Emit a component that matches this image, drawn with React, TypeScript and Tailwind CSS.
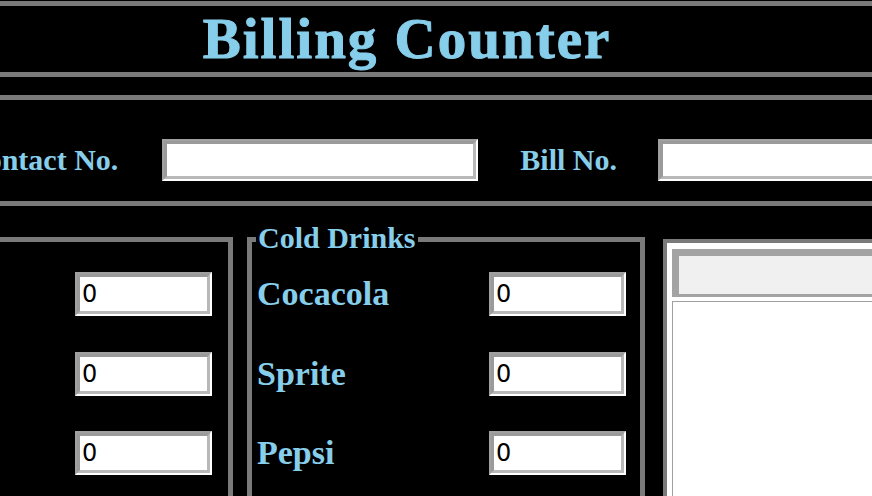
import React from "react";

const serif = "font-['Liberation_Serif','Times_New_Roman',serif]";

function Entry({ value, className = "" }: { value?: string; className?: string }) {
  return (
    <div
      className={`border-2 border-t-[#a0a0a0] border-l-[#a0a0a0] border-b-white border-r-white ${className}`}
    >
      <div className="h-full w-full border-[3px] border-t-[#9a9a9a] border-l-[#9a9a9a] border-b-[#b8b8b8] border-r-[#b8b8b8] bg-white flex items-center pl-[2px] font-['DejaVu_Sans',sans-serif] text-[24px] text-black leading-none">
        {value}
      </div>
    </div>
  );
}

const drinks = ["Cocacola", "Sprite", "Pepsi"];

export default function App() {
  return (
    <div className={`w-[872px] h-[496px] bg-black overflow-hidden ${serif}`}>
      {/* title */}
      <div className="mt-[1px] h-[76px] border-y-[5px] border-[#7a7a7a] flex items-center justify-center pr-[58px]">
        <h1 className="text-[57px] font-bold text-[#87CEEB] tracking-[2px] leading-none mt-[-2px] [-webkit-text-stroke:1px_#87CEEB]">
          Billing Counter
        </h1>
      </div>

      {/* customer info */}
      <div className="mt-[18px] h-[111px] border-y-[5px] border-[#7a7a7a] flex items-center">
        <div className="flex items-center ml-[-35px] mt-[18px]">
          <span className="text-[30px] font-bold text-[#87CEEB] leading-none whitespace-nowrap">
            Contact No.
          </span>
          <Entry className="ml-[44px] w-[316px] h-[42px]" />
          <span className="ml-[42px] text-[30px] font-bold text-[#87CEEB] leading-none whitespace-nowrap">
            Bill No.
          </span>
          <Entry className="ml-[41px] w-[300px] h-[42px]" />
        </div>
      </div>

      {/* products */}
      <div className="mt-[31px] flex items-start h-[300px]">
        <div className="w-[233px] h-full border-t-[5px] border-r-[5px] border-[#7a7a7a] flex flex-col items-end pr-[16px] pt-[30px] gap-[35.5px]">
          {[0, 1, 2].map((i) => (
            <Entry key={i} value="0" className="w-[137px] h-[44px]" />
          ))}
        </div>

        <div className="relative ml-[14px] w-[398px] h-full border-t-[5px] border-x-[5px] border-[#7a7a7a] flex flex-col pl-[5px] pr-[14px] pt-[30px] gap-[35.5px]">
          <span className="absolute left-[4px] top-[-19px] bg-black px-[2px] text-[30px] font-bold text-[#87CEEB] leading-none">
            Cold Drinks
          </span>
          {drinks.map((d) => (
            <div key={d} className="flex items-center justify-between h-[44px]">
              <span className="text-[34px] font-bold text-[#87CEEB] leading-none">{d}</span>
              <Entry value="0" className="w-[137px] h-[44px]" />
            </div>
          ))}
        </div>

        <div className="ml-[18px] mt-[2px] flex-1 h-full border-t-[4px] border-l-[4px] border-[#7a7a7a] bg-white pt-[6px] pl-[5px]">
          <div className="h-[48px] border-t-[7px] border-l-[7px] border-b-[3px] border-[#a3a3a3] bg-[#f0f0f0]" />
          <div className="mt-[4px] h-full border-l border-t border-[#a0a0a0] bg-white" />
        </div>
      </div>
    </div>
  );
}
